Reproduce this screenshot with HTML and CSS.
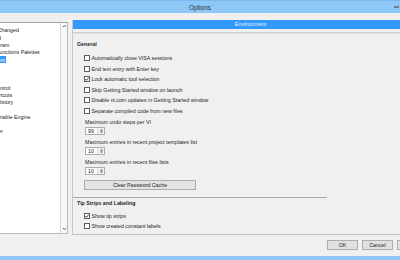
FILE: index.html
```html
<!DOCTYPE html>
<html>
<head>
    <title>Options</title>
    <link rel="stylesheet" href="styles.css">
</head>
<body>
    <div class="dialog">
        <div class="titlebar">
            <span></span>
            <span class="title">Options</span>
            <span class="controls"><span class="minimize"></span></span>
        </div>
        <div class="main">
            <div class="category-list">
                <ul class="categories">
                    <li>New and Changed</li>
                    <li>Dashboard</li>
                    <li>Block Diagram</li>
                    <li>Controls/Functions Palettes</li>
                    <li><span class="selected">Environment</span></li>
                    <li>Paths</li>
                    <li>Printing</li>
                    <li>Security</li>
                    <li>Source Control</li>
                    <li>Menu Shortcuts</li>
                    <li>Revision History</li>
                    <li>Search</li>
                    <li>Shared Variable Engine</li>
                    <li>VI Server</li>
                    <li>Web Server</li>
                </ul>
                <div class="scrollbar">
                    <svg class="arrow" width="5" height="4" viewBox="0 0 5 4"><path d="M1 3 L2.5 1.5 L4 3" fill="none" stroke="#555" stroke-width="1"/></svg>
                    <svg class="arrow" width="5" height="4" viewBox="0 0 5 4"><path d="M1 1 L2.5 2.5 L4 1" fill="none" stroke="#555" stroke-width="1"/></svg>
                </div>
            </div>
            <div class="page">
                <div class="page-header">Environment</div>
                <div class="page-body">
                    <div class="section">
                        <div class="section-title">General</div>
                        <div class="check-row"><span class="checkbox"></span>Automatically close VISA sessions</div>
                        <div class="check-row"><span class="checkbox"></span>End text entry with Enter key</div>
                        <div class="check-row"><span class="checkbox"><svg width="4" height="4" viewBox="0 0 4 4"><path d="M0.3 2 L1.5 3.3 L3.7 0.6" fill="none" stroke="#222" stroke-width="0.9"/></svg></span>Lock automatic tool selection</div>
                        <div class="check-row"><span class="checkbox"></span>Skip Getting Started window on launch</div>
                        <div class="check-row"><span class="checkbox"></span>Disable ni.com updates in Getting Started window</div>
                        <div class="check-row"><span class="checkbox"></span>Separate compiled code from new files</div>

                        <div class="field">
                            <div class="field-label">Maximum undo steps per VI</div>
                            <div class="spin"><span class="spin-value">99</span><span class="spin-arrows"><svg width="5" height="6" viewBox="0 0 5 6"><path d="M1 2.6 L2.5 1 L4 2.6 Z M1 3.4 L2.5 5 L4 3.4 Z" fill="#555"/></svg></span></div>
                        </div>
                        <div class="field">
                            <div class="field-label">Maximum entries in recent project templates list</div>
                            <div class="spin"><span class="spin-value">10</span><span class="spin-arrows"><svg width="5" height="6" viewBox="0 0 5 6"><path d="M1 2.6 L2.5 1 L4 2.6 Z M1 3.4 L2.5 5 L4 3.4 Z" fill="#555"/></svg></span></div>
                        </div>
                        <div class="field">
                            <div class="field-label">Maximum entries in recent files lists</div>
                            <div class="spin"><span class="spin-value">10</span><span class="spin-arrows"><svg width="5" height="6" viewBox="0 0 5 6"><path d="M1 2.6 L2.5 1 L4 2.6 Z M1 3.4 L2.5 5 L4 3.4 Z" fill="#555"/></svg></span></div>
                        </div>
                        <button type="button" class="clear-btn">Clear Password Cache</button>
                    </div>
                    <div class="section tips">
                        <div class="section-title">Tip Strips and Labeling</div>
                        <div class="check-row"><span class="checkbox"><svg width="4" height="4" viewBox="0 0 4 4"><path d="M0.3 2 L1.5 3.3 L3.7 0.6" fill="none" stroke="#222" stroke-width="0.9"/></svg></span>Show tip strips</div>
                        <div class="check-row"><span class="checkbox"></span>Show created constant labels</div>
                    </div>
                </div>
            </div>
        </div>
        <div class="footer">
            <button type="button" class="btn">OK</button>
            <button type="button" class="btn">Cancel</button>
            <button type="button" class="btn">Help</button>
        </div>
    </div>
</body>
</html>
```

FILE: styles.css
```css
body {
    margin: 0;
    width: 400px;
    height: 260px;
    overflow: hidden;
    background: #f0f0f0;
    font-family: "Liberation Sans", Arial, sans-serif;
    color: #1e1e1e;
}
.dialog {
    width: 458px;
    height: 260px;
    margin-left: -29px;
    padding: 0 1px 0 2px;
    box-sizing: border-box;
    border-bottom: 4px solid #8ec6f7;
    display: flex;
    flex-direction: column;
}
.titlebar {
    height: 13px;
    margin: 0 -1px 0 -2px;
    background: #8ec8f8;
    border-top: 1px solid #7db8ec;
    box-sizing: border-box;
    display: grid;
    grid-template-columns: 1fr auto 1fr;
    align-items: center;
}
.title {
    font-size: 6.4px;
    color: #333;
}
.controls {
    justify-self: end;
    margin-right: 30px;
    display: flex;
}
.minimize {
    width: 5px;
    height: 2px;
    margin-top: -1px;
    background: #6f7f8c;
}
.main {
    flex: 1;
    margin-top: 7px;
    display: flex;
    gap: 4px;
}

/* category tree */
.category-list {
    width: 95px;
    margin: 2px 0 1px;
    background: #fff;
    border: 1px solid #b9b9b9;
    border-top-color: #a4a4a4;
    box-sizing: border-box;
    display: flex;
}
.categories {
    flex: 1;
    list-style: none;
    margin: 0;
    padding: 4.4px 0 0 1px;
    font-size: 5.3px;
    line-height: 7.2px;
    white-space: nowrap;
    overflow: hidden;
}
.selected {
    background: #3399ff;
    color: #fff;
    padding: 0.5px 1px;
    margin-left: -1px;
}
.scrollbar {
    width: 6px;
    border-left: 1px solid #d6d6d6;
    background: #f8f8f8;
    display: flex;
    flex-direction: column;
    justify-content: space-between;
    align-items: center;
    padding: 1px 0 2px;
}

/* settings page */
.page {
    flex: 1;
    border-left: 1px solid #c6c6c6;
    display: flex;
    flex-direction: column;
}
.page-header {
    height: 9px;
    line-height: 9px;
    background: #3399ff;
    color: #e4f1ff;
    font-size: 5.6px;
    text-align: center;
}
.page-body {
    flex: 1;
    margin-top: 3px;
    border-top: 1px solid #cdcdcd;
    border-bottom: 1px solid #c3c3c3;
    box-shadow: inset 0 1px 0 #e2e2e2;
}
.section {
    padding-left: 4px;
    font-size: 5.3px;
}
.section-title {
    font-weight: bold;
    line-height: 7px;
    padding-top: 7.5px;
    margin-bottom: 5.25px;
}
.check-row {
    height: 10.5px;
    display: flex;
    align-items: center;
    gap: 1.5px;
    padding-left: 7px;
}
.checkbox {
    width: 6px;
    height: 6px;
    box-sizing: border-box;
    border: 1px solid #5e5e5e;
    background: #fff;
    display: flex;
    align-items: center;
    justify-content: center;
}
.field {
    padding-left: 8px;
    margin-top: 3.5px;
}
.section-title + .check-row ~ .check-row + .field {
    margin-top: 2.75px;
}
.field-label {
    line-height: 7px;
}
.spin {
    width: 20px;
    height: 8px;
    margin-top: 1.5px;
    box-sizing: border-box;
    border: 1px solid #abadb3;
    background: #fff;
    display: flex;
}
.spin-value {
    flex: 1;
    padding-left: 2px;
    line-height: 6px;
}
.spin-arrows {
    width: 6px;
    border-left: 1px solid #dadada;
    background: #f2f2f2;
    display: flex;
    align-items: center;
    justify-content: center;
}
.clear-btn {
    display: block;
    width: 112px;
    height: 10px;
    margin: 5px 0 0 7px;
    padding: 0;
    border: 1px solid #adadad;
    background: #e3e3e3;
    font-family: inherit;
    font-size: 5.3px;
    color: #1e1e1e;
}
.tips {
    width: 254px;
    box-sizing: border-box;
    margin-top: 7px;
    border-top: 1px solid #a9a9a9;
}
.tips .section-title {
    padding-top: 1.5px;
    margin-bottom: 4px;
}

/* dialog buttons */
.footer {
    height: 21px;
    display: flex;
    justify-content: flex-end;
    align-items: flex-start;
    gap: 4px;
}
.btn {
    width: 31px;
    height: 10px;
    margin-top: 5px;
    padding: 0;
    border: 1px solid #adadad;
    background: #e1e1e1;
    font-family: inherit;
    font-size: 5.3px;
    color: #1e1e1e;
}
```
